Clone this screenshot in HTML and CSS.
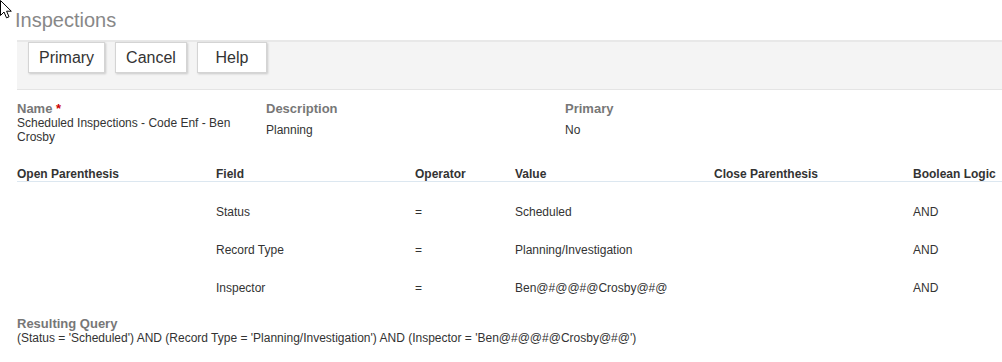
FILE: index.html
```html
<!DOCTYPE html>
<html lang="en">
<head>
  <meta charset="UTF-8" />
  <title>Inspections</title>
  <link rel="stylesheet" href="styles.css">
</head>
<body>
  <svg class="cursor" width="13" height="19" viewBox="0 0 13 19">
    <path d="M0.5 0.5 L0.5 15.5 L4 12 L6.5 17.8 L9 16.8 L6.6 11.2 L11.3 11.2 Z" fill="#fff" stroke="#000" stroke-width="1"/>
  </svg>

  <h1 class="page-title">Inspections</h1>

  <div class="toolbar">
    <button class="btn">Primary</button>
    <button class="btn">Cancel</button>
    <button class="btn">Help</button>
  </div>

  <div class="details">
    <div class="field">
      <div class="label">Name <span class="req">*</span></div>
      <div class="value">Scheduled Inspections - Code Enf - Ben Crosby</div>
    </div>
    <div class="field">
      <div class="label">Description</div>
      <div class="value offset">Planning</div>
    </div>
    <div class="field">
      <div class="label">Primary</div>
      <div class="value offset">No</div>
    </div>
  </div>

  <div class="query-table">
    <div class="row head">
      <div>Open Parenthesis</div>
      <div>Field</div>
      <div>Operator</div>
      <div>Value</div>
      <div>Close Parenthesis</div>
      <div>Boolean Logic</div>
    </div>
    <div class="rows">
      <div class="row">
        <div></div><div>Status</div><div>=</div><div>Scheduled</div><div></div><div>AND</div>
      </div>
      <div class="row">
        <div></div><div>Record Type</div><div>=</div><div>Planning/Investigation</div><div></div><div>AND</div>
      </div>
      <div class="row">
        <div></div><div>Inspector</div><div>=</div><div>Ben@#@@#@Crosby@#@</div><div></div><div>AND</div>
      </div>
    </div>
  </div>

  <div class="result">
    <div class="label">Resulting Query</div>
    <div class="value">(Status = 'Scheduled') AND (Record Type = 'Planning/Investigation') AND (Inspector = 'Ben@#@@#@Crosby@#@')</div>
  </div>
</body>
</html>
```

FILE: styles.css
```css
* {
  margin: 0;
  padding: 0;
  box-sizing: border-box;
}
body {
  font-family: "Liberation Sans", Arial, sans-serif;
  font-size: 12px;
  line-height: 14px;
  color: #333;
  background: #fff;
  overflow: hidden;
}
.cursor {
  position: absolute;
  top: 0;
  left: 0;
}
.page-title {
  font-size: 20px;
  font-weight: normal;
  line-height: 24px;
  color: #888;
  padding: 8px 0 8px 15px;
  height: 40px;
}
.toolbar {
  margin-left: 17px;
  height: 50px;
  background: #f4f4f4;
  border-top: 2px solid #e8e8e8;
  border-bottom: 1px solid #e4e4e4;
  padding-left: 11px;
  display: flex;
  align-items: flex-start;
  gap: 10px;
}
.btn {
  font-family: inherit;
  font-size: 16px;
  color: #333;
  background: #fff;
  border: 1px solid #d4d4d4;
  box-shadow: 1px 1px 2px rgba(0,0,0,0.18);
  height: 31px;
  min-width: 70px;
  padding: 0 10px;
}
.details {
  display: grid;
  grid-template-columns: 249px 299px 1fr;
  margin: 12px 0 0 17px;
}
.field {
  padding-right: 15px;
}
.label {
  font-size: 13px;
  font-weight: bold;
  color: #777;
}
.req {
  color: #c00;
}
.value.offset {
  margin-top: 7px;
}
.query-table {
  margin: 23px 0 0 17px;
}
.row {
  display: grid;
  grid-template-columns: 199px 199px 100px 199px 199px 1fr;
  height: 38px;
  align-items: center;
}
.row.head {
  height: 15px;
  align-items: start;
  font-weight: bold;
  border-bottom: 1px solid #dce7f0;
}
.rows {
  padding-top: 11px;
}
.result {
  margin: 10px 0 0 17px;
}
```
